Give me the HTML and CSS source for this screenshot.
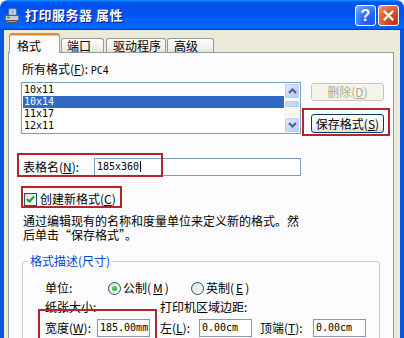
FILE: index.html
```html
<!DOCTYPE html>
<html lang="zh-CN">
<head>
<meta charset="utf-8">
<title>打印服务器 属性</title>
<link rel="stylesheet" href="styles.css">
</head>
<body>
<div class="window">
  <div class="titlebar">
    <svg class="ticon" width="16" height="16" viewBox="0 0 16 16">
      <path d="M5 1 L12 1 L12 7 L5 7 Z" fill="#fff" stroke="#7d8ea8" stroke-width="1"/>
      <path d="M6.5 3 H10.5 M6.5 5 H10.5" stroke="#3b6fd6" stroke-width="1"/>
      <path d="M1.5 7.5 L14.5 7.5 L15 12.5 L1 12.5 Z" fill="#c9ced6" stroke="#56606e" stroke-width="1"/>
      <path d="M2 12.5 L14 12.5 L13.5 14.5 L2.5 14.5 Z" fill="#8e96a3" stroke="#4a525e" stroke-width="1"/>
      <path d="M3 9.5 H6" stroke="#2f9b3a" stroke-width="1.4"/>
    </svg>
    <span class="title">打印服务器 属性</span>
    <div class="tbtns">
      <div class="tbtn help">?</div>
      <div class="tbtn close">
        <svg width="19" height="19" viewBox="0 0 19 19"><path d="M5.5 5.5 L13.5 13.5 M13.5 5.5 L5.5 13.5" stroke="#fff" stroke-width="2.2" stroke-linecap="square"/></svg>
      </div>
    </div>
  </div>
  <div class="frame">
    <div class="tabs">
      <div class="tab active">格式</div>
      <div class="tab t2">端口</div>
      <div class="tab t3">驱动程序</div>
      <div class="tab t4">高级</div>
    </div>
    <div class="panel">
      <div class="lbl-all">所有格式(<u>F</u>): <span class="lat">PC4</span></div>
      <div class="listrow">
        <div class="listbox">
          <div class="items">
            <div class="item">10x11</div>
            <div class="item sel">10x14</div>
            <div class="item">11x17</div>
            <div class="item">12x11</div>
          </div>
          <div class="vscroll">
            <div class="sbtn"><svg width="9" height="6" viewBox="0 0 9 6"><path d="M1 5 L4.5 1.5 L8 5" fill="none" stroke="#4d6185" stroke-width="2"/></svg></div>
            <div class="thumb"></div>
            <div class="track"></div>
            <div class="sbtn"><svg width="9" height="6" viewBox="0 0 9 6"><path d="M1 1 L4.5 4.5 L8 1" fill="none" stroke="#4d6185" stroke-width="2"/></svg></div>
          </div>
        </div>
        <div class="btncol">
          <div class="btn disabled">删除(<u>D</u>)</div>
          <div class="btn save">保存格式(<u>S</u>)</div>
        </div>
      </div>
      <div class="namerow">
        <span class="namelbl">表格名(<u>N</u>):</span>
        <div class="input wide"><span class="caret">185x360</span></div>
      </div>
      <div class="checkrow">
        <span class="checkbox"><svg width="11" height="11" viewBox="0 0 11 11"><path d="M2 5 L4.5 7.5 L9 2.5" fill="none" stroke="#21a121" stroke-width="2"/></svg></span>
        <span>创建新格式(<u>C</u>)</span>
      </div>
      <div class="desc">通过编辑现有的名称和度量单位来定义新的格式。然<br>后单击“保存格式”。</div>
      <fieldset class="group">
        <legend>格式描述(尺寸)</legend>
        <div class="unitrow">
          <span class="unitlbl">单位:</span>
          <span class="radiolbl r1"><span class="radio on"></span>公制(<u>M</u>)</span>
          <span class="radiolbl"><span class="radio"></span>英制(<u>E</u>)</span>
        </div>
        <div class="paperrow">
          <span class="paperlbl">纸张大小:</span>
          <span>打印机区域边距:</span>
        </div>
        <div class="sizerow">
          <span class="lw">宽度(<u>W</u>):</span>
          <div class="input small">185.00mm</div>
          <span class="ll">左(<u>L</u>):</span>
          <div class="input small">0.00cm</div>
          <span class="lt">顶端(<u>T</u>):</span>
          <div class="input small">0.00cm</div>
        </div>
      </fieldset>
      <div class="mark m-save"></div>
      <div class="mark m-name"></div>
      <div class="mark m-check"></div>
      <div class="mark m-width"></div>
    </div>
  </div>
</div>
</body>
</html>
```
FILE: styles.css
```css
* { box-sizing: border-box; margin: 0; padding: 0; }
html, body { width: 404px; height: 338px; overflow: hidden; background: #ffffff; }
body {
  font-family: "SimSun", "Noto Sans CJK SC", sans-serif;
  font-size: 12px;
  line-height: 14px;
  color: #000;
}
u { text-decoration: underline; text-underline-offset: 1px; }
.lat { font-family: "DejaVu Sans Mono", monospace; font-size: 10px; }

.window {
  width: 404px;
  height: 338px;
  display: flex;
  flex-direction: column;
  border-radius: 8px 8px 0 0;
  overflow: hidden;
}

.titlebar {
  height: 30px;
  flex: none;
  display: flex;
  align-items: center;
  padding: 0 5px 0 4px;
  background: linear-gradient(180deg, #0997ff, #0053ee 8%, #0050ee 40%, #0066ff 88%, #0066ff 93%, #005bff 95%, #003dd7 96%, #003dd7);
}
.ticon { flex: none; margin-top: 1px; }
.title {
  margin-left: 5px;
  color: #fff;
  font-weight: bold;
  font-size: 13px;
  letter-spacing: 0.5px;
  text-shadow: 1px 1px #0f1089;
}
.tbtns { margin-left: auto; display: flex; gap: 2px; }
.tbtn {
  width: 21px;
  height: 21px;
  border: 1px solid #fff;
  border-radius: 3px;
  display: flex;
  align-items: center;
  justify-content: center;
}
.help {
  background: radial-gradient(circle at 85% 85%, #1c56e6 0%, #2f6df4 45%, #5d95fb 80%, #9cc0ff 100%);
  color: #fff;
  font-family: "Liberation Sans", sans-serif;
  font-weight: bold;
  font-size: 16px;
  line-height: 19px;
}
.close {
  background: radial-gradient(circle at 85% 85%, #c23515 0%, #d9502a 45%, #e9785a 80%, #f3a88f 100%);
}

.frame {
  flex: 1;
  background: #ece9d8;
  border-left: 4px solid #0855dd;
  border-right: 4px solid #0855dd;
  padding: 3px 6px 0 4px;
}

.tabs {
  display: flex;
  align-items: flex-end;
  height: 19px;
  margin-left: 1px;
  position: relative;
  z-index: 1;
}
.tab {
  height: 14px;
  border: 1px solid #919b9c;
  border-bottom: none;
  border-radius: 3px 3px 0 0;
  background: linear-gradient(#ffffff, #f3f2ee 60%, #e6e4dc);
  line-height: 13px;
  padding-left: 5px;
  white-space: nowrap;
}
.tab.active {
  width: 51px;
  height: 20px;
  margin-bottom: -1px;
  background: #fcfcfe;
  border-top: 2px solid #e68b2c;
  box-shadow: inset 0 1px #ffc73c;
  padding: 4px 0 0 7px;
}
.t2 { width: 43px; margin-left: 1px; }
.t3 { width: 60px; margin-left: 2px; padding-left: 6px; }
.t4 { width: 47px; margin-left: 1px; padding-left: 6px; }

.panel {
  position: relative;
  width: 386px;
  height: 300px;
  border: 1px solid #919b9c;
  background: #fcfcfe;
  padding: 9px 0 0 12px;
}

.lbl-all { margin-left: 1px; }

.listrow { display: flex; margin-top: 4px; }
.listbox {
  width: 280px;
  height: 52px;
  border: 1px solid #7f9db9;
  background: #fff;
  display: flex;
}
.items {
  flex: 1;
  padding: 1px 0 0 1px;
  font-family: "DejaVu Sans Mono", monospace;
  font-size: 10px;
}
.item { height: 12px; line-height: 12px; padding-left: 1px; }
.item.sel { background: #316ac5; color: #fff; }

.vscroll {
  width: 16px;
  display: flex;
  flex-direction: column;
  background: #f6f5f0;
}
.sbtn {
  height: 16px;
  border: 1px solid #fff;
  border-radius: 2px;
  background: linear-gradient(135deg, #e3ebfd, #c5d5fb 60%, #b3c6f4);
  box-shadow: inset 0 0 0 1px #bccdf4;
  display: flex;
  align-items: center;
  justify-content: center;
}
.thumb {
  height: 8px;
  margin-top: 1px;
  border: 1px solid #fff;
  border-radius: 2px;
  background: linear-gradient(90deg, #d0dcfb, #bfd0fb);
  box-shadow: inset 0 0 0 1px #b6c8f3;
}
.track { flex: 1; }

.btncol { margin-left: 10px; display: flex; flex-direction: column; }
.btn {
  width: 73px;
  border: 1px solid #003c74;
  border-radius: 3px;
  background: linear-gradient(#ffffff, #f4f3ee 70%, #e3e0d6);
  text-align: center;
  white-space: nowrap;
}
.btn.disabled {
  margin-top: 1px;
  height: 18px;
  line-height: 16px;
  border-color: #c9c7ba;
  background: #f5f4ea;
  color: #aca899;
}
.btn.save {
  margin-top: 13px;
  height: 19px;
  line-height: 17px;
}

.namerow { display: flex; align-items: center; margin-top: 24px; }
.namelbl { width: 73px; padding-left: 2px; }
.input {
  height: 18px;
  border: 1px solid #7f9db9;
  background: #fff;
  line-height: 16px;
  padding-left: 2px;
  white-space: nowrap;
  font-family: "DejaVu Sans Mono", monospace;
  font-size: 10px;
}
.input.wide { width: 207px; }
.caret { border-right: 1px solid #000; padding-right: 1px; }

.checkrow { display: flex; align-items: center; margin-top: 16px; }
.checkbox {
  width: 13px;
  height: 13px;
  margin: 0 3px 0 3px;
  border: 1px solid #1c5180;
  background: linear-gradient(135deg, #dcdcd7, #fff);
  display: flex;
  align-items: center;
  justify-content: center;
}

.desc { margin-top: 8px; padding-left: 2px; line-height: 14px; }

.group {
  margin-top: 12px;
  margin-left: 1px;
  width: 358px;
  border: 1px solid #d0d0bf;
  border-radius: 3px;
  padding: 0 0 20px 5px;
}
.group legend {
  padding: 0 2px;
  color: #0046d5;
  line-height: 14px;
}
.unitrow {
  display: flex;
  align-items: center;
  height: 16px;
  margin-top: 12px;
  padding-left: 17px;
}
.unitlbl { width: 63px; }
.radiolbl { display: flex; align-items: center; gap: 2px; }
.r1 { width: 83px; }
.radio {
  width: 13px;
  height: 13px;
  border-radius: 50%;
  border: 1px solid #1c5180;
  background: linear-gradient(135deg, #dcdcd7, #fff);
  display: inline-flex;
  align-items: center;
  justify-content: center;
}
.radio.on::after {
  content: "";
  width: 5px;
  height: 5px;
  border-radius: 50%;
  background: radial-gradient(circle at 35% 35%, #5fd35f, #21a121);
}
.paperrow { display: flex; margin-top: 4px; padding-left: 17px; }
.paperlbl { width: 115px; }
.sizerow { display: flex; align-items: center; margin-top: 5px; padding-left: 17px; }
.lw { width: 52px; }
.input.small { width: 53px; }
.ll { width: 39px; margin-left: 10px; }
.lt { width: 53px; margin-left: 8px; }

.mark {
  position: absolute;
  border: 2px solid #b3262b;
}
.m-save { left: 293px; top: 55px; width: 88px; height: 28px; }
.m-name { left: 8px; top: 100px; width: 146px; height: 24px; }
.m-check { left: 12px; top: 133px; width: 101px; height: 22px; }
.m-width { left: 29px; top: 256px; width: 119px; height: 40px; }
```
